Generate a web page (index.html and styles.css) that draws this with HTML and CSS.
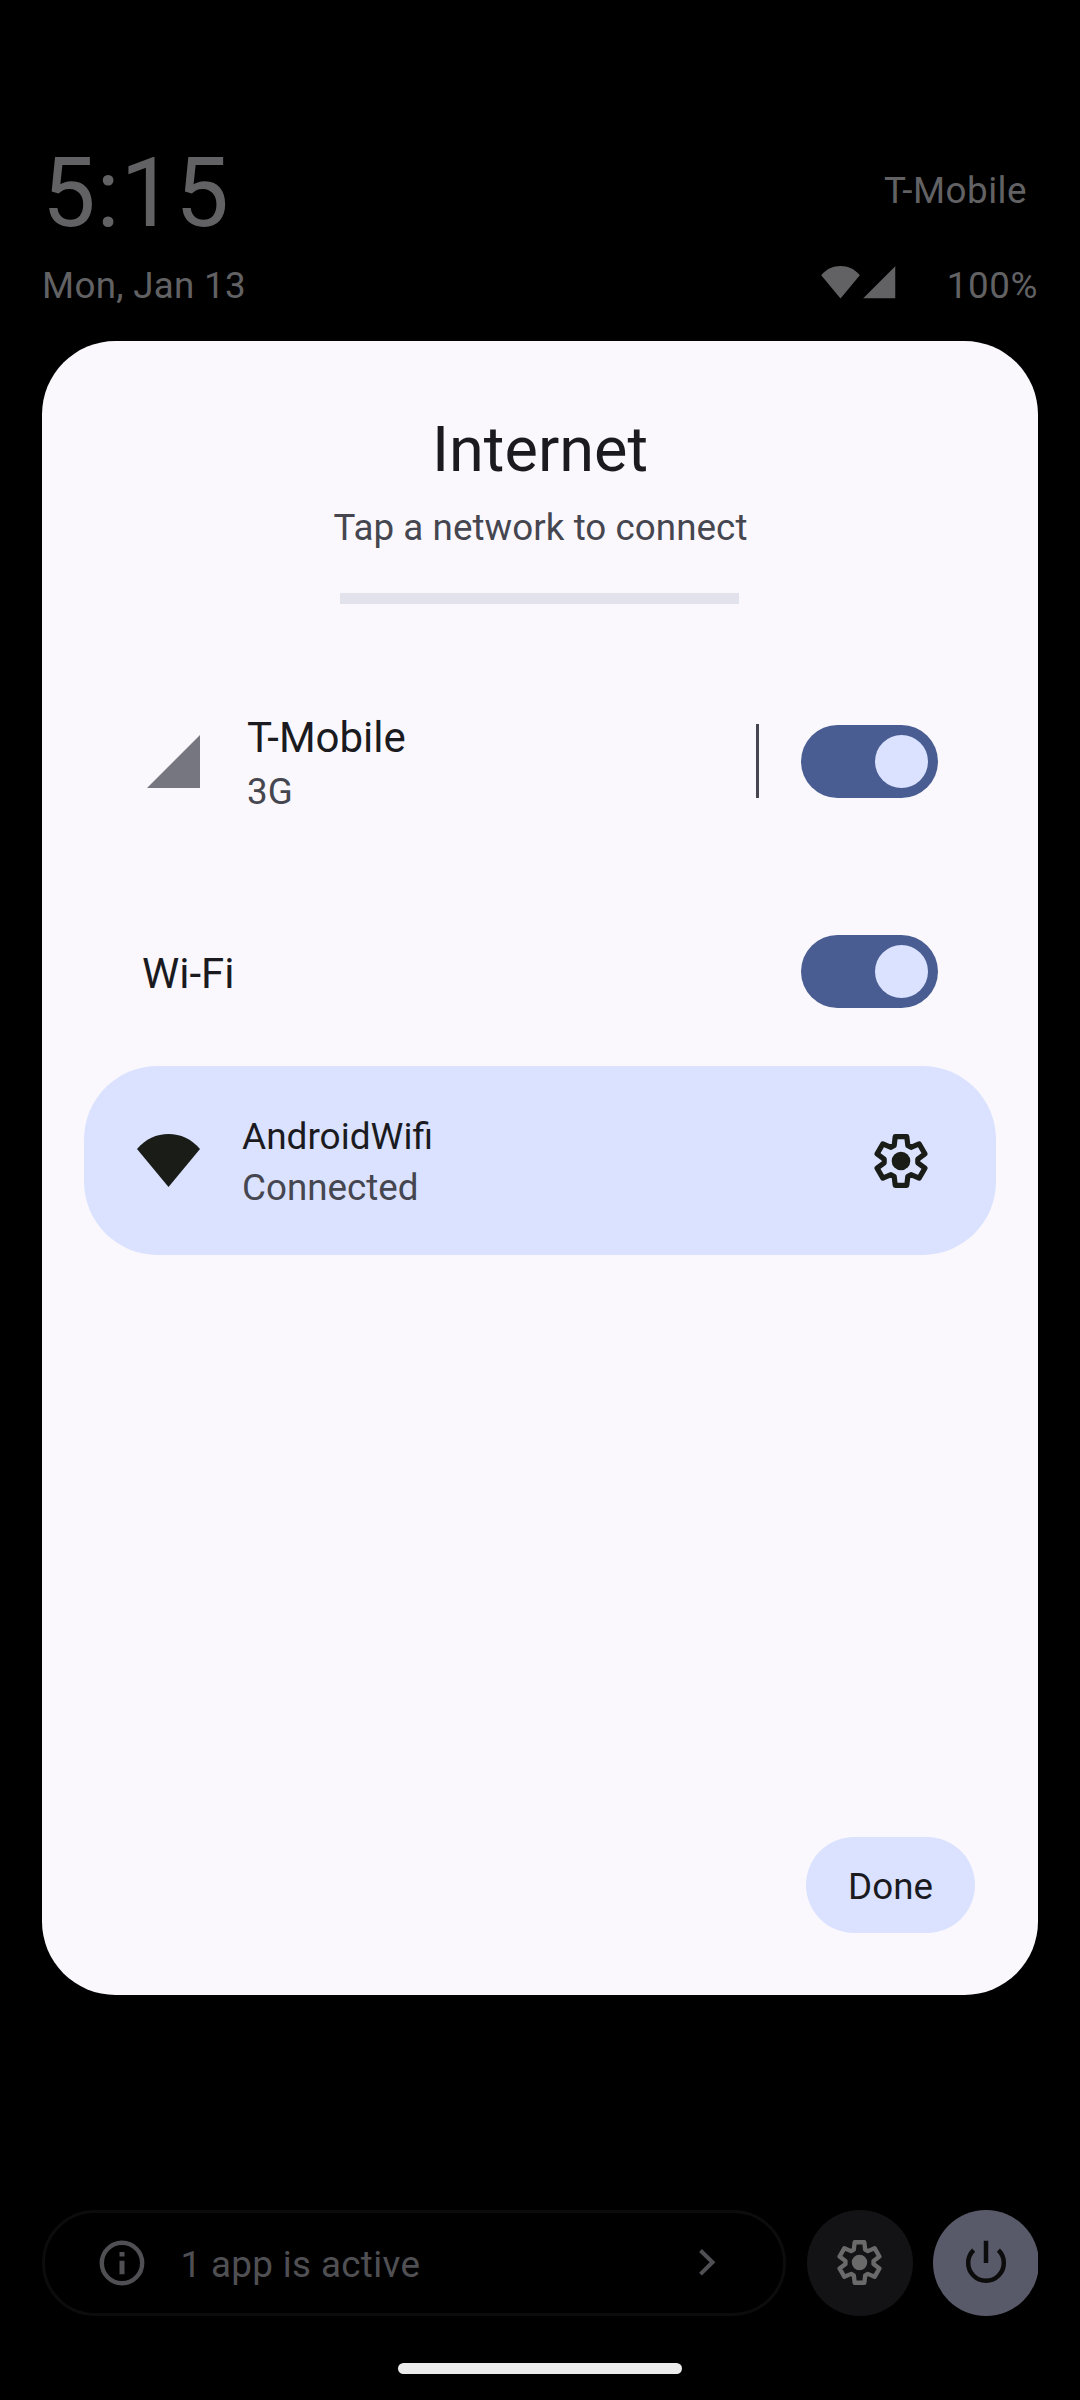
FILE: index.html
```html
<!DOCTYPE html>
<html lang="en">
<head>
<meta charset="utf-8">
<title>Internet</title>
<link rel="stylesheet" href="styles.css">
</head>
<body>
<svg class="defs" width="0" height="0">
  <symbol id="gear" viewBox="-27 -27 54 54">
    <path d="M-6.8-15.5-5.8-24.3H5.8L6.8-15.5 10.02-13.64 18.14-17.17 23.94-7.13 16.82-1.86V1.86L23.94 7.13 18.14 17.17 10.02 13.64 6.8 15.5 5.8 24.3H-5.8L-6.8 15.5-10.02 13.64-18.14 17.17-23.94 7.13-16.82 1.86V-1.86L-23.94-7.13-18.14-17.17-10.02-13.64Z" fill="none" stroke="currentColor" stroke-width="5.2" stroke-linejoin="round"/>
    <circle r="9.3" fill="currentColor"/>
  </symbol>
  <symbol id="wifi" viewBox="0 0 63 53">
    <path d="M0 15C8.500 5 19.500 0 31.500 0S54.500 5 63 15L31.500 53Z" fill="currentColor"/>
  </symbol>
  <symbol id="signal" viewBox="0 0 53 53">
    <path d="M53 0V53H0Z" fill="currentColor"/>
  </symbol>
</svg>
<header class="shade-header">
  <div class="header-row">
    <span class="clock">5:15</span>
    <span class="carrier">T-Mobile</span>
  </div>
  <div class="header-row status-row">
    <span class="date">Mon, Jan 13</span>
    <div class="status">
      <svg class="status-wifi"><use href="#wifi"/></svg>
      <svg class="status-signal"><use href="#signal"/></svg>
      <span class="battery">100%</span>
    </div>
  </div>
</header>
<main class="dialog">
  <h1 class="title">Internet</h1>
  <p class="subtitle">Tap a network to connect</p>
  <div class="progress"></div>
  <section class="row mobile-row">
    <svg class="mobile-icon"><use href="#signal"/></svg>
    <div class="labels">
      <span class="name">T-Mobile</span>
      <span class="summary">3G</span>
    </div>
    <span class="divider"></span>
    <div class="switch"><span class="thumb"></span></div>
  </section>
  <section class="row wifi-row">
    <span class="name">Wi-Fi</span>
    <div class="switch"><span class="thumb"></span></div>
  </section>
  <section class="network">
    <svg class="network-icon"><use href="#wifi"/></svg>
    <div class="labels">
      <span class="ssid">AndroidWifi</span>
      <span class="summary">Connected</span>
    </div>
    <svg class="network-gear"><use href="#gear"/></svg>
  </section>
  <button class="done">Done</button>
</main>
<footer class="footer">
  <div class="active-apps">
    <svg class="info" viewBox="-23 -23 46 46">
      <circle r="20.200" fill="none" stroke="currentColor" stroke-width="4.400"/>
      <path d="M-2.500-11H2.500V-6.500H-2.500ZM-2.500-2.300H2.500V11.300H-2.500Z" fill="currentColor"/>
    </svg>
    <span class="active-text">1 app is active</span>
    <svg class="chevron" viewBox="0 0 17 27"><path d="M1.500 1.500 13.500 13.300 1.500 25.100" fill="none" stroke="currentColor" stroke-width="4"/></svg>
  </div>
  <div class="round settings"><svg><use href="#gear"/></svg></div>
  <div class="round power">
    <svg viewBox="-23 -23 46 46"><path d="M-12.400-12.800A17.800 17.800 0 1 0 12.400-12.800M0-22.300V0" fill="none" stroke="currentColor" stroke-width="4.500"/></svg>
  </div>
</footer>
<div class="nav-handle"></div>
</body>
</html>
```
FILE: styles.css
```css
* { box-sizing: border-box; }
body {
  margin: 0;
  width: 1080px;
  height: 2400px;
  overflow: hidden;
  background: #000;
  font-family: Roboto, sans-serif;
  font-size: 36.75px;
  line-height: 44px;
  display: flex;
  flex-direction: column;
}
svg { display: block; flex: none; }
.defs { position: absolute; }
.shade-header {
  height: 341px;
  padding: 137px 42px 0;
  color: #626264;
}
.header-row { display: flex; justify-content: space-between; }
.clock { font-size: 95.500px; line-height: 112px; letter-spacing: 0.9px; }
.carrier { margin: 32px 11px 0 0; letter-spacing: 0.5px; }
.date { letter-spacing: 0.3px; }
.status-row { margin-top: 15px; }
.status { display: flex; }
.status-wifi { width: 39px; height: 32.500px; margin: 2px 3.500px 0 0; }
.status-signal { width: 32.500px; height: 32.500px; margin: 2px 51px 0 0; }
.battery { letter-spacing: 0.6px; }
.dialog {
  width: 996px;
  height: 1654px;
  margin: 0 42px;
  padding: 72px 42px 62px;
  border-radius: 73.500px;
  background: #faf8fd;
  color: #1b1b1f;
  display: flex;
  flex-direction: column;
}
.title { margin: 0; font-size: 63px; font-weight: 400; line-height: 74px; text-align: center; }
.subtitle { margin: 19px 0 0 1px; text-align: center; letter-spacing: 0.06px; color: #45464f; }
.progress { width: 399px; height: 11px; margin: 43px 0 0 256px; background: #e1e2ec; }
.row { display: flex; align-items: center; padding-right: 58px; }
.mobile-row { height: 99px; margin-top: 108px; padding-left: 63px; }
.labels { flex: 1; display: flex; flex-direction: column; padding-top: 3px; }
.name { font-size: 42px; line-height: 50px; }
.summary { color: #45464f; }
.mobile-icon { width: 53px; height: 53px; margin-right: 47px; color: #767680; }
.mobile-row .summary { margin-top: 7px; }
.divider { width: 3px; height: 74px; margin: 0 42px 1px 0; background: #45464f; }
.switch {
  width: 137px;
  height: 73px;
  padding: 10px;
  border-radius: 37px;
  background: #495d92;
  display: flex;
  justify-content: flex-end;
}
.thumb { width: 53px; height: 53px; border-radius: 50%; background: #dae2ff; }
.wifi-row { height: 73px; margin-top: 124px; padding-left: 58px; justify-content: space-between; }
.wifi-row .name { padding-top: 5px; }
.network {
  height: 189px;
  margin-top: 58px;
  padding: 0 68px 0 53px;
  border-radius: 73.500px;
  background: #dae2ff;
  display: flex;
  align-items: center;
}
.network-icon { width: 63px; height: 53px; margin-right: 42px; color: #1a1c18; }
.ssid { font-size: 37px; }
.network .summary { margin-top: 7px; }
.network-gear { width: 54px; height: 54px; color: #1a1c18; }
.done {
  width: 169px;
  height: 96px;
  margin: auto 21px 0 auto;
  padding: 3px 0 0;
  border: 0;
  border-radius: 48px;
  background: #dae2ff;
  color: #1b1b1f;
  font: inherit;
}
.footer { display: flex; height: 106px; margin: 215px 42px 0; overflow: hidden; flex: none; }
.active-apps {
  width: 744px;
  margin-right: 21px;
  padding: 0 67px 1px 53.500px;
  border: 3px solid #0c0c0d;
  border-radius: 53px;
  color: #505054;
  display: flex;
  align-items: center;
  flex: none;
}
.info { width: 46px; height: 46px; margin-right: 36px; }
.active-text { flex: 1; padding-top: 4px; letter-spacing: 0.36px; }
.chevron { width: 17px; height: 27px; }
.round {
  width: 106px;
  height: 106px;
  padding: 0 1px 1px 0;
  border-radius: 50%;
  display: flex;
  align-items: center;
  justify-content: center;
  flex: none;
}
.settings { margin-right: 20px; background: #131315; color: #6a6a6a; }
.settings svg { width: 45px; height: 45px; }
.power { background: #585a69; color: #0c0c0c; }
.power svg { width: 46px; height: 46px; }
.nav-handle { width: 284px; height: 11px; margin: 47px 0 0 398px; border-radius: 6px; background: #ececec; flex: none; }
```
